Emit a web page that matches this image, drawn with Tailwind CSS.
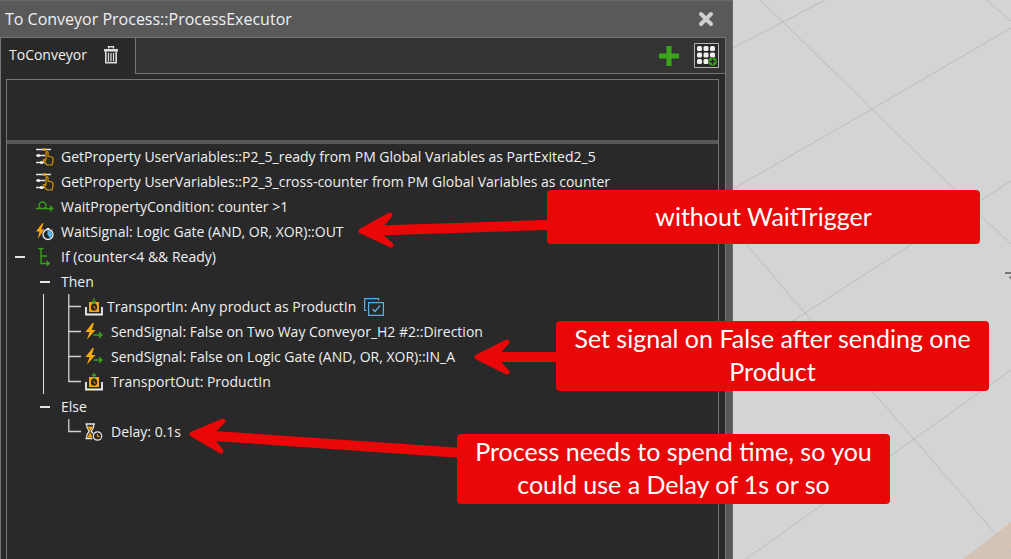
<!DOCTYPE html>
<html lang="en">
<head>
  <meta charset="UTF-8" />
  <meta name="viewport" content="width=device-width, initial-scale=1.0" />
  <title>To Conveyor Process::ProcessExecutor</title>
  <script src="https://cdn.jsdelivr.net/npm/@tailwindcss/browser@4"></script>
</head>
<body class="relative flex min-h-screen overflow-hidden bg-[#d4d4d4] font-['Open_Sans',sans-serif] text-sm text-[#f0f0f0]">

  <!-- icon sprite -->
  <svg class="hidden" aria-hidden="true">
    <symbol id="i-property" viewBox="0 0 18 18">
      <path d="M0 1.500h15M0 7.500h9M0 14.500h9" stroke="#e6e6e6" stroke-width="1.300" fill="none"/>
      <circle cx="8.500" cy="1.500" r="1.500" fill="#f0a30a"/>
      <circle cx="2.500" cy="7.500" r="1.600" fill="#fff"/><circle cx="5.500" cy="14.500" r="1.600" fill="#fff"/>
      <path d="M10 12V4.500q0-1 1-1t1 1V8l3.800 1q1.200.4 1.200 1.500v3l-1 3.500h-5L7.500 13q-.5-1 .3-1.300.7-.2 2.200 1.300" fill="#292929" stroke="#d8930a" stroke-width="1.200"/>
    </symbol>
    <symbol id="i-wait" viewBox="0 0 18 18">
      <path d="M0 10.500h16.500M14 8l2.700 2.500L14 13M4.500 10.500Q3 9 3 7.500a3.500 3.500 0 0 1 7 0Q10 9 8.500 10.500" fill="none" stroke="#38a31a" stroke-width="1.400"/>
    </symbol>
    <symbol id="i-waitsignal" viewBox="0 0 18 18">
      <path d="M6.500 0 0 8.500h3.500L1.800 16 8 6.500H5.200L7.500.5z" fill="#fba90a"/>
      <circle cx="12" cy="11.500" r="5" fill="#292929" stroke="#eee" stroke-width="1.300"/>
      <path d="M12 8v3.500l2 3a3.500 3.500 0 0 0-2-6.500z" fill="#5bb8ee" stroke="#5bb8ee"/>
      <path d="M10.500 5.500h3M7.700 6.500l1 1M16.300 6.500l-1 1" stroke="#eee"/>
    </symbol>
    <symbol id="i-if" viewBox="0 0 18 18">
      <path d="M2 .5h5.500M5 .5v15h8M5 8h6M10.500 13l2.700 2.500-2.700 2.500" fill="none" stroke="#38a31a" stroke-width="1.300"/>
    </symbol>
    <symbol id="i-box" viewBox="0 0 18 18">
      <path d="M1 9v7.500h16V9" fill="none" stroke="#eee" stroke-width="1.800"/>
      <path d="M4 4h10v10H4z" fill="#f5a50a"/>
      <path d="M7.500 5.500h3l1.500 2v3.500l-1.500 1.500h-3L6 11V7.500z" fill="#33270c"/>
      <path d="M9 8v1.500l1.500 1" fill="none" stroke="#f5a50a"/>
    </symbol>
    <symbol id="i-in" viewBox="0 0 18 18">
      <use href="#i-box"/><path d="M9 0v5M7 3l2 2.300L11 3" fill="none" stroke="#38a31a" stroke-width="1.200"/>
    </symbol>
    <symbol id="i-out" viewBox="0 0 18 18">
      <use href="#i-box"/><path d="M9 6V.8M7 3l2-2.300L11 3" fill="none" stroke="#38a31a" stroke-width="1.200"/>
    </symbol>
    <symbol id="i-send" viewBox="0 0 18 18">
      <path d="M7.500 0 .5 9h4L2 16.500 10.500 7H6.700L9 0z" fill="#fba90a"/>
      <path d="M8.500 12h8.500M14 9.300l2.800 2.700-2.800 2.700" fill="none" stroke="#38a31a" stroke-width="1.600"/>
    </symbol>
    <symbol id="i-delay" viewBox="0 0 18 18">
      <path d="M.5 1h9.500M.5 15.500h7M1.500 1q0 4 2.700 7.200Q1.500 11 1.500 15M9 1q0 4-2.800 7.200L8 10.500" fill="none" stroke="#e6e6e6" stroke-width="1.300"/>
      <path d="M2.500 3.500h5.600L5.300 8zM5.200 9l2.200 5.500H2.500z" fill="#f5a50a"/>
      <circle cx="12.500" cy="13" r="4.200" fill="#292929" stroke="#e6e6e6" stroke-width="1.200"/>
      <path d="M12.500 13.500V11M12.500 13.500h2" stroke="#f5a50a" stroke-width="1.100"/>
    </symbol>
    <!-- tree connectors: middle and last child -->
    <symbol id="t-mid" viewBox="0 0 13 25"><path d="M.8 0v25M0 12.500h13" stroke="#d0d0d0" stroke-width="1.300"/></symbol>
    <symbol id="t-end" viewBox="0 0 13 25"><path d="M.8 0v12.500H13" fill="none" stroke="#d0d0d0" stroke-width="1.300"/></symbol>
  </svg>

  <!-- 3D view floor grid -->
  <svg class="absolute inset-y-0 right-0 h-[559px] w-[278px]" viewBox="733 0 278 559" aria-hidden="true">
    <path d="M963 559l48-37v37z" fill="#d5c3b6"/>
    <g fill="none" stroke="#bcbcbc">
      <path d="M760 0l23 22 89 87 83 81 25 25 31 29"/>
      <path d="M733 48l50-26 42-22"/>
      <path d="M733 189l139-80 139-81"/>
      <path d="M986 0l25 21"/>
      <path d="M1011 181l-99 63-107 69-72 47"/>
      <path d="M733 229l12 14 60 70 67 78 42 48 81 94 16 18"/>
      <path d="M1011 370l-97 69-91 65-77 55"/>
    </g>
    <path d="M1005 273h6M1009 277.500h2" stroke="#777" stroke-width="2"/>
  </svg>

  <!-- process panel -->
  <main class="relative flex w-[733px] flex-col border-r border-[#6a6a6a] bg-[#595959] pr-[6px]">
    <header class="-mr-[6px] flex h-[37px] items-center justify-between border-t border-[#686868] pr-[18px] pl-[5px]">
      <h1 class="text-base">To Conveyor Process::ProcessExecutor</h1>
      <button type="button" aria-label="Close" class="flex">
        <svg class="size-4" viewBox="0 0 16 16"><path d="M3 3l10 10M13 3L3 13" stroke="#cfcfcf" stroke-width="4" stroke-linecap="round"/></svg>
      </button>
    </header>

    <section class="flex flex-1 flex-col border-x border-t border-[#757575] bg-[#292929]">
      <div class="flex h-9 bg-[#333]">
        <div class="flex w-[135px] items-center gap-4 border-r border-[#757575] bg-[#292929] pb-[2px] pl-2">
          <span>ToConveyor</span>
          <button type="button" aria-label="Delete" class="flex">
            <svg class="h-[18px] w-4" viewBox="0 0 14 18" fill="none" stroke="#dcdcdc"><path d="M4.500 2.500V.8h5v1.700" stroke-width="1.400"/><path d="M0 4.300h14" stroke-width="2.600"/><path d="M1.800 5.500v11.300h10.400V5.500" stroke-width="1.600"/><path d="M4.500 7v8.500M7 7v8.500M9.500 7v8.500" stroke-width="1.200"/></svg>
          </button>
        </div>
        <div class="flex flex-1 items-center justify-end gap-[15px] border-b border-[#757575] pr-[6px]">
          <button type="button" aria-label="Add routine" class="flex">
            <svg class="size-5" viewBox="0 0 20 20"><path d="M10 0v20M0 10h20" stroke="#3aa618" stroke-width="5"/></svg>
          </button>
          <button type="button" aria-label="Add from grid" class="flex">
            <svg class="size-[25px]" viewBox="0 0 25 25">
              <path d="M.5.5h24v24H.5z" fill="#292929" stroke="#b5b5b5"/>
              <g fill="#f0f0f0"><rect x="3" y="3" width="5" height="5" rx="1.500"/><rect x="9.500" y="3" width="5" height="5" rx="1.500"/><rect x="16" y="3" width="5" height="5" rx="1.500"/><rect x="3" y="9.500" width="5" height="5" rx="1.500"/><rect x="9.500" y="9.500" width="5" height="5" rx="1.500"/><rect x="16" y="9.500" width="5" height="5" rx="1.500"/><rect x="3" y="16" width="5" height="5" rx="1.500"/><rect x="9.500" y="16" width="5" height="5" rx="1.500"/></g>
              <circle cx="18.500" cy="18.500" r="4.300" fill="#38a31a"/><path d="M18.500 15.500v6M15.500 18.500h6" stroke="#222" stroke-width="1.300"/>
            </svg>
          </button>
        </div>
      </div>

      <div class="mt-[5px] mr-[6px] ml-[5px] flex flex-1 flex-col border-x border-t border-[#757575]">
        <div class="box-content h-15 border-b-4 border-[#595959]"></div>
        <ul class="leading-[25px] whitespace-nowrap">
          <li class="flex h-[25px] items-center gap-[7px] pl-[29px]"><svg class="size-[18px]"><use href="#i-property"/></svg>GetProperty UserVariables::P2_5_ready from PM Global Variables as PartExited2_5</li>
          <li class="flex h-[25px] items-center gap-[7px] pl-[29px]"><svg class="size-[18px]"><use href="#i-property"/></svg>GetProperty UserVariables::P2_3_cross-counter from PM Global Variables as counter</li>
          <li class="flex h-[25px] items-center gap-[7px] pl-[29px]"><svg class="size-[18px]"><use href="#i-wait"/></svg>WaitPropertyCondition: counter &gt;1</li>
          <li class="flex h-[25px] items-center gap-[7px] pl-[29px]"><svg class="size-[18px]"><use href="#i-waitsignal"/></svg>WaitSignal: Logic Gate (AND, OR, XOR)::OUT</li>
          <li>
            <div class="flex h-[25px] items-center gap-[7px] pl-2">
              <button type="button" aria-label="Collapse If" class="mr-1 h-[2px] w-[10px] bg-[#e6e6e6]"></button>
              <svg class="size-[18px]"><use href="#i-if"/></svg>If (counter&lt;4 &amp;&amp; Ready)
            </div>
            <ul>
              <li>
                <div class="flex h-[25px] items-center gap-[11px] pl-[33px]"><button type="button" aria-label="Collapse Then" class="h-[2px] w-[10px] bg-[#e6e6e6]"></button>Then</div>
                <ul class="ml-[36px] border-l border-[#e0e0e0] pl-6">
                  <li class="flex h-[25px] items-center gap-1"><svg class="h-[25px] w-[13px]"><use href="#t-mid"/></svg><svg class="size-[18px]"><use href="#i-in"/></svg>TransportIn: Any product as ProductIn
                    <svg class="ml-1 h-[18px] w-5" viewBox="0 0 20 18" fill="none" stroke="#5bb0e0" stroke-width="1.200"><path d="M2.500 12.500H.6V.6h14v2M4.600 4.600h14.800v12.800H4.600zM8.500 11l2.500 2.500 5-6"/></svg>
                  </li>
                  <li class="flex h-[25px] items-center gap-1"><svg class="h-[25px] w-[13px]"><use href="#t-mid"/></svg><svg class="mr-1 size-[18px]"><use href="#i-send"/></svg>SendSignal: False on Two Way Conveyor_H2 #2::Direction</li>
                  <li class="flex h-[25px] items-center gap-1"><svg class="h-[25px] w-[13px]"><use href="#t-mid"/></svg><svg class="mr-1 size-[18px]"><use href="#i-send"/></svg>SendSignal: False on Logic Gate (AND, OR, XOR)::IN_A</li>
                  <li class="flex h-[25px] items-center gap-1"><svg class="h-[25px] w-[13px]"><use href="#t-end"/></svg><svg class="mr-1 size-[18px]"><use href="#i-out"/></svg>TransportOut: ProductIn</li>
                </ul>
              </li>
              <li>
                <div class="flex h-[25px] items-center gap-[11px] pl-[33px]"><button type="button" aria-label="Collapse Else" class="h-[2px] w-[10px] bg-[#e6e6e6]"></button>Else</div>
                <ul class="pl-[61px]">
                  <li class="flex h-[25px] items-center gap-1"><svg class="h-[25px] w-[13px]"><use href="#t-end"/></svg><svg class="mr-1 size-[18px]"><use href="#i-delay"/></svg>Delay: 0.1s</li>
                </ul>
              </li>
            </ul>
          </li>
        </ul>
      </div>
    </section>
  </main>

  <!-- annotations -->
  <svg class="absolute top-0 left-0 h-[559px] w-[600px]" viewBox="0 0 600 559" fill="none" stroke="#ea0707" stroke-linejoin="round" aria-hidden="true">
    <path d="M377 230.500L560 224.500M494 357h66M207 435.500l263 18" stroke-width="10"/>
    <g fill="#ea0707" stroke-width="5">
      <path d="M361 231l29-16-10 12v8l11 10z"/>
      <path d="M477 357l30-15-10 11v8l10 11z"/>
      <path d="M192 434l31-13-12 12v6l10 12z"/>
    </g>
  </svg>
  <p class="absolute top-[190px] left-[547px] flex h-[54px] w-[433px] items-center justify-center rounded bg-[#ea0707] pb-[2px] text-center font-['Lato',sans-serif] text-[25px]/[33px] text-white">without WaitTrigger</p>
  <p class="absolute top-[321px] left-[556px] flex h-[70px] w-[433px] items-center justify-center rounded bg-[#ea0707] pb-[2px] text-center font-['Lato',sans-serif] text-[25px]/[33px] text-white">Set signal on False after sending one<br>Product</p>
  <p class="absolute top-[434px] left-[457px] flex h-[70px] w-[433px] items-center justify-center rounded bg-[#ea0707] pb-[2px] text-center font-['Lato',sans-serif] text-[25px]/[33px] text-white">Process needs to spend time, so you<br>could use a Delay of 1s or so</p>
</body>
</html>
